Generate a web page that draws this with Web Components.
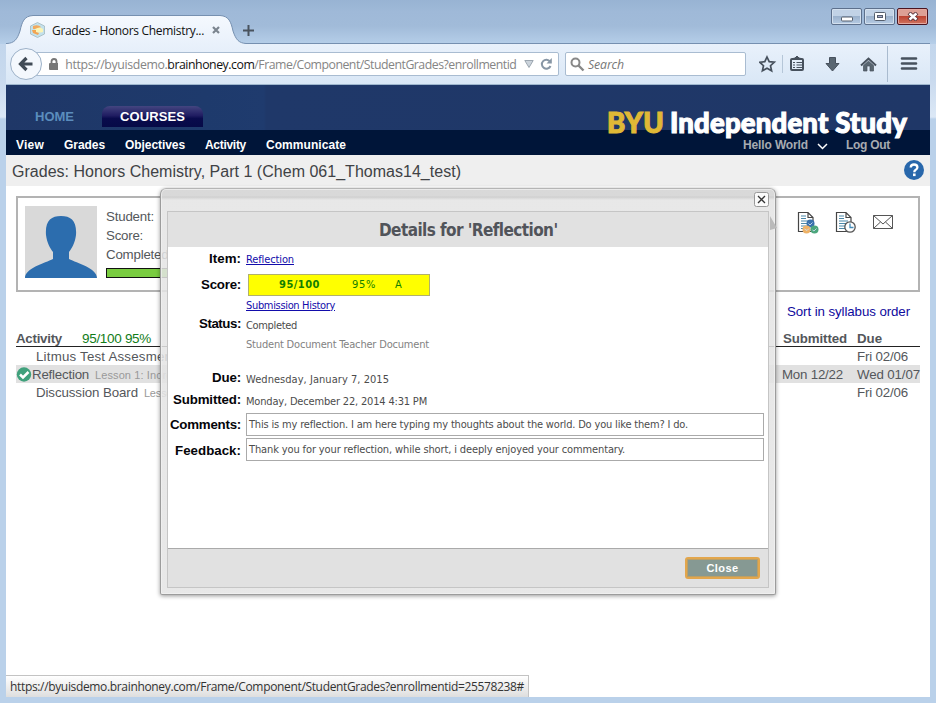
<!DOCTYPE html>
<html lang="en"><head><meta charset="utf-8"><title>Grades - Honors Chemistry</title>
<style>html,body{margin:0;width:936px;height:703px;overflow:hidden;background:#bad1ea}</style></head>
<body><app-window></app-window>
<script>
function define(name, css, html){
  customElements.define(name, class extends HTMLElement{
    connectedCallback(){
      if(this.shadowRoot) return;
      this.attachShadow({mode:'open'}).innerHTML='<style>*{box-sizing:border-box}'+css+'</style>'+html;
    }
  });
}

define('app-window', `
:host{display:flex;flex-direction:column;width:936px;height:703px;position:relative;background:linear-gradient(#bad1ea,#c9daee 80px,#dce8f6 117px,#bad1ea 119px)}
.page{margin:0 6px 6px;flex:1;background:#fff;display:flex;flex-direction:column;min-height:0}
detail-dialog{position:absolute;left:160px;top:188px}
link-status{position:absolute;left:6px;bottom:6px}
`, `<title-bar></title-bar><nav-bar></nav-bar><div class="page"><course-header></course-header><grade-page></grade-page></div><detail-dialog></detail-dialog><link-status></link-status>`);

define('title-bar', `
:host{display:flex;height:44px;flex:none;position:relative;background:linear-gradient(#98b3d3,#9fb9d8 12px,#a1bbd9 26px,#b2cbe6 41px,#b6cfe9);font:12px "Open Sans",sans-serif;color:#111;justify-content:space-between;padding:0 6px}
.shape{position:absolute;left:6px;top:14px}
.tab{display:flex;align-items:center;height:30px;margin-top:15px;padding-left:24px;position:relative}
.fav{margin-right:7px}.x{margin-left:8px}.plus{margin-left:23px}
.wins{display:flex;gap:2px;padding:8px 2px 0 0}
.w{width:31px;height:17px;border:1px solid #5d708c;border-radius:2px;box-shadow:inset 0 0 0 1px #d3e0ee;background:linear-gradient(#c1d2e6 45%,#9bb2cd 50%,#b6cbe3);display:flex;align-items:center;justify-content:center}
.r{border-color:#4b1520;box-shadow:inset 0 0 0 1px #e5a89f;background:linear-gradient(#dda095 45%,#bd4432 50%,#cf7460)}
`, `<svg class="shape" width="924" height="30"><defs><linearGradient id="g" x2="0" y2="1"><stop stop-color="#f5f9fe"/><stop offset="1" stop-color="#e9f1fb"/></linearGradient></defs><path d="M0 29.5H1C8 29 11 26 14 17C16 8 18 2 27 1.500H214C223 2 225 8 227 17C230 26 233 29 240 29.500V30H0Z" fill="url(#g)"/><path d="M0 29.500H1C8 29 11 26 14 17C16 8 18 2 27 1.500H214C223 2 225 8 227 17C230 26 233 29 240 29.500H924" fill="none" stroke="#7690b0"/></svg>
<div class="tab"><svg class="fav" width="15" height="16" viewBox="0 0 15 16"><path d="M7.500 .500L14.500 4V12L7.500 15.500L.500 12V4Z" fill="#c3e1ec" stroke="#a2b9bf" stroke-width=".8"/><path d="M3 4Q8 2 11 5L8 7H3Z" fill="#f1a95e"/><path d="M5 7Q10 4 13 7V10Q9 11 6 10Z" fill="#fbf4b4"/><path d="M2 8H6V10L9 11L8 13L3 11Z" fill="#f3a451"/></svg><fit-text w="152">Grades - Honors Chemistry...</fit-text><svg class="x" width="8" height="8"><path d="M1 1L7 7M7 1L1 7" stroke="#7b858f" stroke-width="2.200"/></svg><svg class="plus" width="11" height="11"><path d="M5.500 0V11M0 5.500H11" stroke="#49535e" stroke-width="2"/></svg></div>
<div class="wins"><div class="w"><svg width="12" height="10"><rect x=".5" y="5" width="11" height="4" rx="1" fill="#fff" stroke="#555f6d"/></svg></div><div class="w"><svg width="12" height="9"><rect x=".5" y=".5" width="11" height="8" rx="1" fill="#fff" stroke="#555f6d"/><rect x="3.500" y="3.500" width="5" height="2" fill="#aac" stroke="#555f6d"/></svg></div><div class="w r"><svg width="12" height="9"><path d="M2 1L10 8M10 1L2 8" stroke="#55333a" stroke-width="4.200"/><path d="M2.500 1.500L9.500 7.500M9.500 1.500L2.500 7.500" stroke="#fff" stroke-width="2.500"/></svg></div></div>`);

define('nav-bar', `
:host{display:flex;flex:none;align-items:center;height:41px;margin:0 6px;background:linear-gradient(#e9f1fb,#d9e7f6);border-bottom:1px solid #9fb7ce;position:relative;font:12.300px "Open Sans",sans-serif;color:#858585}
.back{width:32px;height:32px;border:1px solid #9cb1c8;border-radius:50%;background:#f4f8fd;display:grid;place-items:center;margin-left:4px;z-index:1;flex:none}
.url,.search{height:24px;border:1px solid #a9bcd1;background:#fff;display:flex;align-items:center;border-radius:2px}
.url{width:528px;margin-left:-11px;padding-left:16px;flex:none}.url b{font-weight:400;color:#111;display:flex}
.lock{margin-right:7px}.search{width:181px;margin-left:6px;padding-left:4px;font-style:italic;color:#777;flex:none}
.search svg{margin-right:3px}.tools{display:flex;align-items:center;flex:1;padding-left:13px;height:40px}
`, `<div class="back"><svg width="16" height="16"><path d="M8.500 2L2.500 8L8.500 14M3 8H14.500" stroke="#414b56" stroke-width="3.200" fill="none"/></svg></div>
<div class="url"><svg class="lock" width="10" height="12" style="margin-left:1px"><path d="M2.500 6V3.500Q2.500 1 5 1T7.500 3.500V6" stroke="#777" stroke-width="1.800" fill="none"/><rect y="5" width="10" height="7" rx="1" fill="#777"/></svg><fit-text w="102">https://byuisdemo.</fit-text><b><fit-text w="87">brainhoney.com</fit-text></b><fit-text w="262">/Frame/Component/StudentGrades?enrollmentid</fit-text><svg width="36" height="14" style="margin-left:8px"><path d="M.8 3.500H9.200L5 10.500Z" fill="#ccd4dc" stroke="#9ca6b0"/><path d="M26 4.500A4.500 4.500 0 1 0 26.500 9" fill="none" stroke="#8796a5" stroke-width="2"/><path d="M27.800 1V6.500H22.500Z" fill="#8796a5"/></svg></div>
<div class="search"><svg width="15" height="15"><circle cx="5.500" cy="5.500" r="4" fill="none" stroke="#888" stroke-width="2"/><path d="M8.500 8.500L13.500 13.500" stroke="#888" stroke-width="2.400"/></svg><fit-text w="36">Search</fit-text></div>
<div class="tools"><svg width="165" height="38" fill="none" stroke="#47515d"><path d="M8 12.500L10.200 17.200L15.300 17.700L11.500 21.200L12.600 26.300L8 23.700L3.400 26.300L4.500 21.200L.7 17.700L5.800 17.200Z" transform="translate(0 -.5)" stroke-width="1.700"/><path d="M23.500 10V28" stroke="#b5c6d8"/><rect x="32" y="14" width="12" height="11" rx="1" stroke-width="2"/><path d="M34 13.500L36 13L38 11L40 13L42 13.500Z" fill="#47515d"/><path d="M34 17.500H36M37.500 17.500H43M34 20H36M37.500 20H43M34 22.500H36M37.500 22.500H43" stroke-width="1.200"/><path d="M70.500 12.500H76.500V18.500H80L73.500 26L67 18.500H70.500Z" fill="#596671"/><path d="M102 20.500L109.500 13.500L117 20.500" stroke-width="2"/><path d="M104.500 20.500L109.500 16L114.500 20.500V26H111V21H108V26H104.500Z" fill="#596671" stroke-width=".7"/><path d="M128.500 1V37" stroke="#a9bbcf"/><path d="M143 13.500H157M143 18.500H157M143 23.500H157" stroke-width="2.600" stroke-linecap="round"/></svg></div>`);

define('course-header', `
:host{display:block;flex:none;position:relative;height:70px;font:bold 12px "Liberation Sans",sans-serif;color:#fff}
.top{height:45px;background:linear-gradient(90deg,#1f3767,#1e3a6c 200px,#1f3b6e 258px,#1f3869 260px,#1f3767);display:flex;align-items:flex-end;font-size:13px;padding:0 0 3px 29px}
.home{color:#5b8dbd;height:21px;line-height:22px}.courses{margin-left:28px;width:101px;height:21px;border-radius:8px 8px 0 0;background:linear-gradient(#444580,#201d62 45%,#090b4c 60%,#060a47);text-align:center;line-height:22px}
.menu{height:25px;background:#001539;display:flex;align-items:center;padding:4px 0 0 10px;line-height:12px}
.menu fit-text{margin-right:20px}.menu .user{margin-left:auto;color:#a7abb1;display:flex;align-items:center;padding-right:40px}.menu .user fit-text{margin:0}.user svg{margin:3px 18px 0 9px}
.logo{position:absolute;left:601px;top:26px;display:flex;gap:6px;font:900 27.500px/24px Lato,sans-serif;-webkit-text-stroke:1.100px}.logo i{font-style:normal;color:#e0b936;display:flex}
`, `<div class="top"><fit-text class="home" w="39">HOME</fit-text><div class="courses"><fit-text w="65">COURSES</fit-text></div></div>
<div class="menu"><fit-text w="28">View</fit-text><fit-text w="41">Grades</fit-text><fit-text w="60">Objectives</fit-text><fit-text w="41">Activity</fit-text><fit-text w="80">Communicate</fit-text><div class="user"><fit-text w="65">Hello World</fit-text><svg width="11" height="7"><path d="M1 1L5.500 5.500L10 1" stroke="#fff" stroke-width="1.500" fill="none"/></svg><fit-text w="44">Log Out</fit-text></div></div>
<div class="logo"><i><fit-text w="57">BYU</fit-text></i><fit-text w="237">Independent Study</fit-text></div>`);

define('grade-page', `
:host{display:flex;flex-direction:column;flex:1;font:13.300px "Liberation Sans",sans-serif;color:#54575b}
.head{height:31px;background:#efefef;display:flex;align-items:center;justify-content:space-between;padding:2px 6px 0;font-size:16px;color:#404245}
.card{margin:10px 10px 0;height:96px;border:2px solid #b3b3b3;padding:8px 7px;display:flex}
.info{margin-left:9px;line-height:19px;display:flex;flex-direction:column;margin-top:1px}.bar{width:220px;height:10px;background:#79cc40;border:1px solid #111;margin-top:4px}
.icons{margin-left:auto;padding:5px 17px 0 0}
.sort{align-self:flex-end;margin:12px 20px 0 0;color:#0e0a9d;line-height:15px;height:25px}
.table{margin:0 10px}.row{height:18px;display:flex;align-items:center;position:relative}
.th{height:18px;border-bottom:1px solid #222;font-weight:bold;padding-top:1px}.th .pct{font-weight:400;color:#117c18;font-size:13.500px;margin-left:20px}
.sel{background:#e1e1e1}.row small{font-size:11px;color:#999;margin-left:6px;padding-top:1px}.ind{margin-left:20px}
.dates{margin-left:auto;display:grid;grid-template-columns:75px 63px}
`, `<div class="head"><fit-text w="449">Grades: Honors Chemistry, Part 1 (Chem 061_Thomas14_test)</fit-text><svg width="20" height="20" style="margin-top:-3px"><circle cx="10" cy="10" r="10" fill="#2867ab"/><path d="M6.700 7.500Q6.900 4.500 10 4.500Q13.400 4.500 13.400 7.200Q13.400 9 11.500 10Q10.300 10.700 10.300 12.200" fill="none" stroke="#fff" stroke-width="2.300"/><rect x="9" y="13.500" width="2.600" height="2.600" fill="#fff"/></svg></div>
<div class="card"><svg width="72" height="72"><rect width="72" height="72" fill="#d9d9d9"/><path d="M36 10C26 10 20 15 21 29C22 37 25 42 28 46V53C20 57 0 62 0 72H72C72 62 52 57 44 53V46C47 42 50 37 51 29C52 15 46 10 36 10Z" fill="#2c6dae"/></svg>
<div class="info"><fit-text w="48">Student:</fit-text><fit-text w="37">Score:</fit-text><fit-text w="66">Completed:</fit-text><div class="bar"></div></div>
<svg class="icons" width="114" height="30" viewBox="0 0 97 25" style="width:114px;height:30px"><g fill="#fff" stroke="#454545" stroke-width="1.200"><path d="M1.500 1.500H11L16 6.500V20.500H1.500ZM11 1.500V6.500H16"/><path d="M39.500 1.500H49L54 6.500V20.500H39.500ZM49 1.500V6.500H54"/></g><path d="M4 5H9M4 7.500H9M4 10H13M4 12.500H13M4 15H13M4 17.500H11M42 5H47M42 7.500H47M42 10H51M42 12.500H49M42 15H49M42 17.500H48" stroke="#4b88a9"/><circle cx="13.500" cy="12.500" r="4" fill="#3971ac"/><circle cx="9.500" cy="18.500" r="4" fill="#eeb267"/><circle cx="17.500" cy="18.500" r="4" fill="#4ba67c"/><path d="M11.500 12.500L13 14L15.500 11.500M7.500 18L10 19.500L12 17.500M15.500 19L17 20L19.500 17.500" fill="none" stroke="#cde" stroke-width=".9"/><circle cx="53" cy="16" r="5.200" fill="#fff" stroke="#555" stroke-width="1.300"/><path d="M53 12.500V16.500H56.500" stroke="#438bb8" fill="none" stroke-width="1.300"/><path d="M76.500 4.500H95.500V17.500H76.500ZM76.500 4.500L86 13L95.500 4.500M76.500 17.500L83.500 11M95.500 17.500L88.500 11" fill="none" stroke="#555"/></svg></div>
<div class="sort"><fit-text w="123">Sort in syllabus order</fit-text></div>
<div class="table"><div class="row th"><fit-text w="46">Activity</fit-text><span class="pct"><fit-text w="69">95/100 95%</fit-text></span><div class="dates"><fit-text w="64" style="margin-left:1px">Submitted</fit-text><fit-text w="25">Due</fit-text></div></div>
<div class="row"><fit-text class="ind" w="140">Litmus Test Assesment</fit-text><div class="dates"><span></span><fit-text w="51">Fri 02/06</fit-text></div></div>
<div class="row sel"><svg width="16" height="16"><circle cx="8" cy="8.500" r="7.200" fill="#40a17c"/><path d="M4 8.500L7 11.500L12.500 6" fill="none" stroke="#fff" stroke-width="2.500"/></svg><fit-text w="57">Reflection</fit-text><small><fit-text w="98">Lesson 1: Inorganic</fit-text></small><div class="dates"><fit-text w="61">Mon 12/22</fit-text><fit-text w="63">Wed 01/07</fit-text></div></div>
<div class="row"><fit-text class="ind" w="102">Discussion Board</fit-text><small><fit-text w="34">Lesson</fit-text></small><div class="dates"><span></span><fit-text w="51">Fri 02/06</fit-text></div></div></div>`);

define('detail-dialog', `
:host{display:flex;flex-direction:column;width:616px;height:407px;padding:0 6px 6px;border:1px solid #9c9c9c;border-top-color:#b5b5b5;border-radius:6px 6px 2px 2px;background:linear-gradient(rgba(214,214,214,.93) 9px,rgba(228,228,228,.86) 11px);box-shadow:0 1px 4px #0006,inset 0 0 0 1px #f3f3f3aa;font:11px "DejaVu Sans Condensed","DejaVu Sans",sans-serif;color:#4c4c4c}
.chrome{height:22px;display:flex;justify-content:flex-end;align-items:center;flex:none;padding-top:0}
.chrome svg{display:block;margin-top:-2px}
.inner{flex:1;border:1px solid #c5c5c5;background:#fff;display:flex;flex-direction:column;min-height:0}
.title{height:35px;background:#e1e1e1;display:flex;align-items:center;justify-content:center;font-weight:bold;font-size:17px;color:#51545a;flex:none}
.foot{height:39px;border-top:1px solid #aaa;background:#e1e1e1;margin-top:auto;display:flex;justify-content:flex-end;padding:8px 8px 0 0}
.btn{width:75px;height:22px;border:2px solid #e2a64d;border-radius:3px;background:#869993;box-shadow:inset 0 0 0 1px #bb9f65;color:#fff;text-align:center;font:bold 11px/19px "Liberation Sans",sans-serif}
.score{width:182px;height:22px;background:#ff0;border:1px solid #b1b16c;margin-left:2px;color:#138000;display:flex;align-items:center;padding-left:30px}
.score b{width:73px}.score span{width:43px}
a{color:#120cab;text-decoration:underline;display:flex}.muted{color:#828282}
.box{width:518px;height:23px;border:1px solid #aaa;padding-left:2px;display:flex;align-items:center}
.arrow{position:absolute;left:609px;top:27px}
`, `<svg class="arrow" width="8" height="15"><path d="M0 0L7 12L0 14Z" fill="#bababa"/></svg><div class="chrome"><svg width="15" height="15"><rect x=".5" y=".5" width="14" height="14" rx="2" fill="#fafafa" stroke="#999"/><path d="M4 4L11 11M11 4L4 11" stroke="#333" stroke-width="1.300"/></svg></div>
<div class="inner"><div class="title"><fit-text w="178">Details for 'Reflection'</fit-text></div>
<detail-row style="--h:25px;--l:-1px" label="Item:" lw="32"><a><fit-text w="48">Reflection</fit-text></a></detail-row>
<detail-row style="--h:25px" label="Score:" lw="40"><div class="score"><b><fit-text w="41">95/100</fit-text></b><span><fit-text w="24">95%</fit-text></span>A</div></detail-row>
<detail-row style="--h:18px;--v:-1px"><a><fit-text w="89">Submission History</fit-text></a></detail-row>
<detail-row style="--h:20px;--l:-2px" label="Status:" lw="42"><fit-text w="51">Completed</fit-text></detail-row>
<detail-row style="--h:18px"><span class="muted"><fit-text w="183">Student Document Teacher Document</fit-text></span></detail-row>
<detail-row style="--h:22px;margin-top:15px;--l:-2px" label="Due:" lw="29"><fit-text w="143">Wednesday, January 7, 2015</fit-text></detail-row>
<detail-row style="--h:22px;--l:-2px" label="Submitted:" lw="68"><fit-text w="181">Monday, December 22, 2014 4:31 PM</fit-text></detail-row>
<detail-row style="--h:25px;--b:0px" label="Comments:" lw="71"><div class="box"><fit-text w="439">This is my reflection. I am here typing my thoughts about the world. Do you like them? I do.</fit-text></div></detail-row>
<detail-row style="--h:25px;--l:1px" label="Feedback:" lw="66"><div class="box"><fit-text w="376">Thank you for your reflection, while short, i deeply enjoyed your commentary.</fit-text></div></detail-row>
<div class="foot"><div class="btn"><fit-text w="32">Close</fit-text></div></div></div>`);

customElements.define('detail-row', class extends HTMLElement{
  connectedCallback(){
    if(this.shadowRoot) return;
    const label=this.getAttribute('label')||'', lw=this.getAttribute('lw')||0;
    this.attachShadow({mode:'open'}).innerHTML=`<style>:host{display:grid;grid-template-columns:73px 1fr;column-gap:5px;align-items:center;height:var(--h);flex:none}
    .l{justify-self:end;font:bold 13.300px "Liberation Sans",sans-serif;color:#050509;transform:translateY(var(--l,0))}.v{display:flex;transform:translateY(var(--v,0))}</style><div class="l">${label?`<fit-text w="${lw}">${label}</fit-text>`:''}</div><div class="v"><slot></slot></div>`;
  }
});

define('link-status', `
:host{display:flex;align-items:center;width:523px;height:22px;padding-left:4px;background:linear-gradient(#fff,#dedede);border:1px solid #c3c3c3;border-width:1px 1px 0 0;font:12px "Open Sans",sans-serif;color:#333}
`, `<fit-text w="514">https://byuisdemo.brainhoney.com/Frame/Component/StudentGrades?enrollmentid=25578238#</fit-text>`);

/* Single text run whose letter spacing is tuned so that it spans w pixels. */
customElements.define('fit-text', class extends HTMLElement{
  connectedCallback(){
    if(this.shadowRoot) return;
    this.attachShadow({mode:'open'}).innerHTML='<style>:host{display:inline-block;white-space:nowrap}</style><slot></slot>';
    const r=document.createRange(); r.selectNodeContents(this);
    const w=+this.getAttribute('w'), n=this.textContent.length;
    this.style.letterSpacing=((w-r.getBoundingClientRect().width)/n).toFixed(4)+'px';
    this.style.width=w+'px';
  }
});
</script></body></html>
